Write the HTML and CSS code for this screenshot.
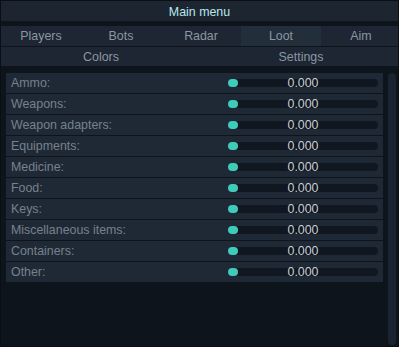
FILE: index.html
```html
<!DOCTYPE html>
<html lang="en">
<head>
    <meta charset="UTF-8">
    <title>Main menu</title>
    <link rel="stylesheet" href="styles.css">
</head>
<body>
    <div class="window">
        <div class="title">Main menu</div>
        <div class="tabs">
            <div class="tab">Players</div>
            <div class="tab">Bots</div>
            <div class="tab">Radar</div>
            <div class="tab active">Loot</div>
            <div class="tab">Aim</div>
        </div>
        <div class="subtabs">
            <div class="tab">Colors</div>
            <div class="tab">Settings</div>
        </div>
        <div class="content">
            <div class="list">
                <div class="row"><span class="label">Ammo:</span><div class="slider"><div class="track"><div class="knob"></div></div><span class="value">0.000</span></div></div>
                <div class="row"><span class="label">Weapons:</span><div class="slider"><div class="track"><div class="knob"></div></div><span class="value">0.000</span></div></div>
                <div class="row"><span class="label">Weapon adapters:</span><div class="slider"><div class="track"><div class="knob"></div></div><span class="value">0.000</span></div></div>
                <div class="row"><span class="label">Equipments:</span><div class="slider"><div class="track"><div class="knob"></div></div><span class="value">0.000</span></div></div>
                <div class="row"><span class="label">Medicine:</span><div class="slider"><div class="track"><div class="knob"></div></div><span class="value">0.000</span></div></div>
                <div class="row"><span class="label">Food:</span><div class="slider"><div class="track"><div class="knob"></div></div><span class="value">0.000</span></div></div>
                <div class="row"><span class="label">Keys:</span><div class="slider"><div class="track"><div class="knob"></div></div><span class="value">0.000</span></div></div>
                <div class="row"><span class="label">Miscellaneous items:</span><div class="slider"><div class="track"><div class="knob"></div></div><span class="value">0.000</span></div></div>
                <div class="row"><span class="label">Containers:</span><div class="slider"><div class="track"><div class="knob"></div></div><span class="value">0.000</span></div></div>
                <div class="row"><span class="label">Other:</span><div class="slider"><div class="track"><div class="knob"></div></div><span class="value">0.000</span></div></div>
            </div>
            <div class="scrollbar"></div>
        </div>
    </div>
</body>
</html>
```

FILE: styles.css
```css
* {
    margin: 0;
    padding: 0;
    box-sizing: border-box;
}

body {
    width: 399px;
    height: 347px;
    background: #0e141c;
    font-family: 'Liberation Sans', Arial, sans-serif;
    font-size: 12px;
    overflow: hidden;
}

.window {
    width: 399px;
    height: 347px;
    border: 1px solid #0a0f15;
    background: #0e141c;
    display: flex;
    flex-direction: column;
    overflow: hidden;
}

.title {
    height: 20px;
    padding-top: 3px;
    line-height: 17px;
    background: #1c2530;
    color: #b9e6ec;
    font-size: 12.4px;
    text-align: center;
    margin-bottom: 5px;
}

.tabs {
    display: grid;
    grid-template-columns: repeat(5, 80px);
    height: 21px;
    background: #1d2632;
    border-bottom: 1px solid #0e141c;
    overflow: hidden;
}

.subtabs {
    display: grid;
    grid-template-columns: repeat(2, 200px);
    height: 19px;
    background: #1d2632;
    overflow: hidden;
}

.tab {
    line-height: 21px;
    text-align: center;
    color: #8a96a2;
    font-size: 12.4px;
}

.subtabs .tab {
    line-height: 20px;
}

.tab.active {
    background: #232e3b;
}

.content {
    flex: 1;
    display: flex;
    padding: 7px 2px 1px 5px;
    gap: 5px;
}

.list {
    flex: 1;
    display: flex;
    flex-direction: column;
    gap: 1px;
}

.row {
    height: 20px;
    background: #1f2935;
    display: flex;
    align-items: center;
    justify-content: space-between;
    padding: 0 5px;
}

.label {
    color: #76818d;
    font-size: 12.4px;
}

.slider {
    display: grid;
    width: 150px;
    align-items: center;
}

.track,
.value {
    grid-area: 1 / 1;
}

.track {
    height: 8px;
    border-radius: 4px;
    background: #101720;
}

.knob {
    width: 10px;
    height: 8px;
    border-radius: 4px;
    background: #3fcab9;
}

.value {
    text-align: center;
    color: #c9ced3;
    font-size: 12.4px;
}

.scrollbar {
    width: 8px;
    border-radius: 4px;
    background: #1a2430;
}
```
